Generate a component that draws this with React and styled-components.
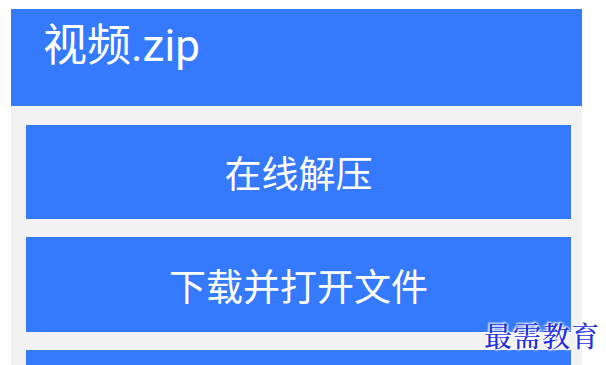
import * as React from "react"
import styled, { createGlobalStyle } from 'styled-components'

const GlobalStyle = createGlobalStyle`
  html, body {
    margin: 0;
    padding: 0;
    background: #ffffff;
  }
  body {
    width: 606px;
    height: 365px;
    overflow: hidden;
    font-family: Roboto, "Noto Sans CJK SC", sans-serif;
  }
`;

const Page = styled.div`
  position: relative;
  width: 606px;
  height: 365px;
  padding: 9px 0 0 11px;
  box-sizing: border-box;
  overflow: hidden;
`;

const Panel = styled.div`
  width: 571px;
  display: flex;
  flex-direction: column;
`;

const Header = styled.div`
  height: 97px;
  background: #3579fc;
  padding: 12px 0 0 32px;
  box-sizing: border-box;
`;

const Title = styled.h1`
  margin: 0;
  color: #ffffff;
  font-family: Roboto, "Noto Sans CJK SC", sans-serif;
  font-weight: 400;
  font-size: 44px;
  line-height: 50px;
`;

const Body = styled.div`
  background: #f2f2f2;
  padding: 19px 11px 40px 15px;
  display: flex;
  flex-direction: column;
  gap: 18px;
`;

const ActionButton = styled.button`
  height: ${p => p.$h || 94}px;
  border: none;
  margin: 0;
  padding: 0;
  background: #3579fc;
  color: #ffffff;
  font-family: "Noto Sans CJK SC", sans-serif;
  font-size: 37px;
  font-weight: 400;
  display: flex;
  align-items: center;
  justify-content: center;
  cursor: pointer;
`;

const Watermark = styled.div`
  position: absolute;
  left: 484px;
  top: 315px;
  font-family: "Noto Serif CJK SC", "Noto Sans CJK SC", serif;
  font-size: 28px;
  font-weight: 500;
  letter-spacing: 1px;
  color: #1f2fe0;
  text-shadow: 0 0 2px #fff, 0 0 3px #fff, 1px 1px 2px #fff, -1px -1px 2px #fff;
`;

const App = () => (
  <Page>
    <GlobalStyle />
    <Panel>
      <Header>
        <Title>视频.zip</Title>
      </Header>
      <Body>
        <ActionButton>在线解压</ActionButton>
        <ActionButton $h={95}>下载并打开文件</ActionButton>
        <ActionButton />
      </Body>
    </Panel>
    <Watermark>最需教育</Watermark>
  </Page>
)

export default App
